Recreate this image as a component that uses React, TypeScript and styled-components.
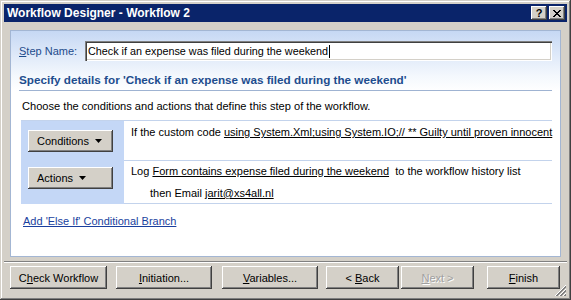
import React from 'react';
import styled, { createGlobalStyle } from 'styled-components';

const GlobalStyle = createGlobalStyle`
  html, body {
    margin: 0;
    padding: 0;
    background: #d4d0c8;
  }
  body {
    font-family: 'Liberation Sans', Arial, sans-serif;
    font-size: 11px;
    color: #000;
  }
  * {
    box-sizing: border-box;
  }
`;

const Window = styled.div`
  position: relative;
  width: 571px;
  height: 300px;
  padding: 4px;
  background: #d4d0c8;
  box-shadow: inset -1px -1px #404040, inset 1px 1px #d4d0c8,
    inset -2px -2px #808080, inset 2px 2px #ffffff;
  display: flex;
  flex-direction: column;
`;

const TitleBar = styled.div`
  height: 18px;
  background: #0a246a;
  display: flex;
  align-items: center;
  padding: 0 2px 0 3px;
`;

const Title = styled.div`
  flex: 1;
  color: #fff;
  font-weight: bold;
  font-size: 12px;
  line-height: 18px;
`;

const CaptionButton = styled.div`
  width: 16px;
  height: 14px;
  margin-left: 2px;
  background: #d4d0c8;
  box-shadow: inset -1px -1px #404040, inset 1px 1px #ffffff,
    inset -2px -2px #808080;
  display: flex;
  align-items: center;
  justify-content: center;
  font-weight: bold;
  font-size: 11px;
  line-height: 14px;
`;

const Panel = styled.div`
  margin: 8px 6px 0;
  height: 227px;
  border: 1px solid #a3b6d3;
  background: linear-gradient(to bottom, #c6d8f4 0px, #f4f8fd 45px, #ffffff 60px);
  display: flex;
  flex-direction: column;
`;

const NameRow = styled.div`
  display: flex;
  align-items: center;
  padding: 10px 8px 0;
`;

const NameLabel = styled.label`
  width: 66px;
  color: #1d4b8c;
  font-size: 11px;
`;

const TextBox = styled.div`
  flex: 1;
  height: 20px;
  background: #fff;
  padding: 0 3px;
  display: flex;
  align-items: center;
  white-space: nowrap;
  font-size: 10.8px;
  box-shadow: inset 1px 1px #808080, inset 2px 2px #404040,
    inset -1px -1px #ffffff, inset -2px -2px #d4d0c8;
`;

const Caret = styled.span`
  display: inline-block;
  width: 1px;
  height: 13px;
  background: #000;
  margin-left: 1px;
`;

const Heading = styled.div`
  margin: 12px 8px 0;
  padding-bottom: 3px;
  line-height: 14px;
  border-bottom: 1px solid #9fb3d2;
  color: #1e4d8e;
  font-weight: bold;
  font-size: 11.7px;
  white-space: nowrap;
`;

const Description = styled.div`
  margin: 8px 8px 0 11px;
  line-height: 14px;
  font-size: 11.1px;
`;

const StepTable = styled.div`
  margin: 7px 8px 0 10px;
  border-top: 1px solid #c3d3ec;
  display: grid;
  grid-template-columns: 103px 1fr;
`;

const MenuCell = styled.div<{ $top: number; $height: number }>`
  height: ${(p) => p.$height}px;
  background: #c4d7f6;
  padding: ${(p) => p.$top}px 0 0 7px;
`;

const RuleCell = styled.div<{ $top: number; $height: number }>`
  height: ${(p) => p.$height}px;
  padding: ${(p) => p.$top}px 0 0 7px;
  border-bottom: 1px solid #c3d3ec;
  white-space: nowrap;
`;

const RuleLine = styled.div<{ $indent?: number }>`
  line-height: 14px;
  padding-left: ${(p) => p.$indent || 0}px;
  & + & {
    margin-top: 8px;
  }
`;

const Value = styled.span`
  text-decoration: underline;
`;

const Button = styled.button<{ $width: number; $ml?: number }>`
  width: ${(p) => p.$width}px;
  height: 23px;
  margin: 0 0 0 ${(p) => p.$ml || 0}px;
  padding: 0;
  border: none;
  background: #d4d0c8;
  font-family: 'Liberation Sans', Arial, sans-serif;
  font-size: 11px;
  color: #000;
  box-shadow: inset -1px -1px #404040, inset 1px 1px #ffffff,
    inset -2px -2px #808080;
  &:disabled {
    color: #a0a0a0;
    text-shadow: 1px 1px #ffffff;
  }
`;

const MenuButton = styled(Button)`
  height: 22px;
  display: flex;
  align-items: center;
  padding-left: 9px;
  gap: 6px;
`;

const BranchLink = styled.a`
  margin: 10px 0 0 12px;
  line-height: 14px;
  color: #1a3f9e;
  text-decoration: underline;
  align-self: flex-start;
`;

const Footer = styled.div`
  margin-top: 4px;
  border-top: 1px solid #808080;
  box-shadow: inset 0 1px #ffffff;
  padding: 4px 0 0 6px;
  display: flex;
`;

const Grip = styled.svg`
  position: absolute;
  right: 4px;
  bottom: 3px;
`;

const Arrow = () => (
  <svg width="7" height="4" viewBox="0 0 7 4">
    <path d="M0 0 H7 L3.5 4 Z" fill="#000" />
  </svg>
);

const App = () => {
  return (
    <>
      <GlobalStyle />
      <Window>
        <TitleBar>
          <Title>Workflow Designer - Workflow 2</Title>
          <CaptionButton>?</CaptionButton>
          <CaptionButton>
            <svg width="8" height="7" viewBox="0 0 8 7" shapeRendering="crispEdges">
              <path d="M0 0h2v1h-2zM6 0h2v1h-2zM1 1h2v1h-2zM5 1h2v1h-2zM2 2h4v1h-4zM3 3h2v1h-2zM2 4h4v1h-4zM1 5h2v1h-2zM5 5h2v1h-2zM0 6h2v1h-2zM6 6h2v1h-2z" fill="#000" />
            </svg>
          </CaptionButton>
        </TitleBar>

        <Panel>
          <NameRow>
            <NameLabel>
              <u>S</u>tep Name:
            </NameLabel>
            <TextBox>
              Check if an expense was filed during the weekend
              <Caret />
            </TextBox>
          </NameRow>

          <Heading>Specify details for 'Check if an expense was filed during the weekend'</Heading>
          <Description>Choose the conditions and actions that define this step of the workflow.</Description>

          <StepTable>
            <MenuCell $top={9} $height={40}>
              <MenuButton $width={85}>
                Conditions <Arrow />
              </MenuButton>
            </MenuCell>
            <RuleCell $top={4} $height={40}>
              <RuleLine>
                If the custom code <Value>using System.Xml;using System.IO;// ** Guilty until proven innocent</Value>
              </RuleLine>
            </RuleCell>
            <MenuCell $top={6} $height={43}>
              <MenuButton $width={85}>
                Actions <Arrow />
              </MenuButton>
            </MenuCell>
            <RuleCell $top={3} $height={43}>
              <RuleLine>
                Log <Value>Form contains expense filed during the weekend</Value>&nbsp; to the workflow history list
              </RuleLine>
              <RuleLine $indent={19}>
                then Email <Value>jarit@xs4all.nl</Value>
              </RuleLine>
            </RuleCell>
          </StepTable>

          <BranchLink href="#">Add 'Else If' Conditional Branch</BranchLink>
        </Panel>

        <Footer>
          <Button $width={97}>
            C<u>h</u>eck Workflow
          </Button>
          <Button $width={96} $ml={9}>
            <u>I</u>nitiation...
          </Button>
          <Button $width={96} $ml={10}>
            <u>V</u>ariables...
          </Button>
          <Button $width={73} $ml={8}>
            &lt; <u>B</u>ack
          </Button>
          <Button $width={73} $ml={2} disabled>
            <u>N</u>ext &gt;
          </Button>
          <Button $width={73} $ml={13}>
            <u>F</u>inish
          </Button>
        </Footer>

        <Grip width="12" height="12" viewBox="0 0 12 12">
          <path d="M11 0L0 11M11 4L4 11M11 8L8 11" stroke="#ffffff" />
          <path d="M11 1L1 11M11 2L2 11M11 5L5 11M11 6L6 11M11 9L9 11M11 10L10 11" stroke="#808080" />
        </Grip>
      </Window>
    </>
  );
};

export default App;
